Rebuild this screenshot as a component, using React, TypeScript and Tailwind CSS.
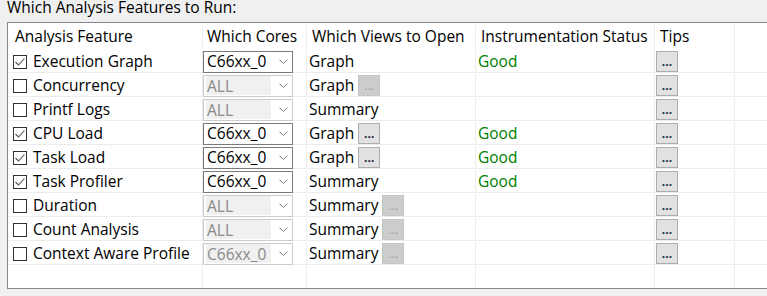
import { useState } from "react";

type Row = {
  name: string;
  checked: boolean;
  core: string;
  coreOn: boolean;
  view: string;
  viewBtn: "none" | "on" | "off";
  status?: string;
};

const rows: Row[] = [
  { name: "Execution Graph", checked: true, core: "C66xx_0", coreOn: true, view: "Graph", viewBtn: "none", status: "Good" },
  { name: "Concurrency", checked: false, core: "ALL", coreOn: false, view: "Graph", viewBtn: "off" },
  { name: "Printf Logs", checked: false, core: "ALL", coreOn: false, view: "Summary", viewBtn: "none" },
  { name: "CPU Load", checked: true, core: "C66xx_0", coreOn: true, view: "Graph", viewBtn: "on", status: "Good" },
  { name: "Task Load", checked: true, core: "C66xx_0", coreOn: true, view: "Graph", viewBtn: "on", status: "Good" },
  { name: "Task Profiler", checked: true, core: "C66xx_0", coreOn: true, view: "Summary", viewBtn: "none", status: "Good" },
  { name: "Duration", checked: false, core: "ALL", coreOn: false, view: "Summary", viewBtn: "off" },
  { name: "Count Analysis", checked: false, core: "ALL", coreOn: false, view: "Summary", viewBtn: "off" },
  { name: "Context Aware Profile", checked: false, core: "C66xx_0", coreOn: false, view: "Summary", viewBtn: "off" },
];

const cols = "grid grid-cols-[195px_104px_169px_179px_80px_1fr]";
const cell = "border-r border-[#ececec] flex items-center";

function Chevron() {
  return (
    <svg width="9" height="5" viewBox="0 0 9 5" className="shrink-0">
      <path d="M0.5 0.5 L4.5 4.5 L8.5 0.5" fill="none" stroke="#8a8a8a" strokeWidth="1" />
    </svg>
  );
}

function Check({ on }: { on: boolean }) {
  return (
    <span className="w-[14px] h-[14px] border border-[#333] bg-white flex items-center justify-center shrink-0">
      {on && (
        <svg width="12" height="12" viewBox="0 0 12 12">
          <path d="M1.5 6 L4.5 9 L10.5 2.5" fill="none" stroke="#555" strokeWidth="1.1" />
        </svg>
      )}
    </span>
  );
}

function Dots({ on }: { on: boolean }) {
  return (
    <span
      className={
        on
          ? "w-[22px] h-[21px] border border-[#adadad] bg-[#e1e1e1] flex items-end justify-center pb-[3px] text-[12px] leading-none font-bold text-[#1a2a40]"
          : "w-[22px] h-[21px] border border-[#c4c4c4] bg-[#cccccc] flex items-end justify-center pb-[3px] text-[12px] leading-none text-[#9a9a9a]"
      }
    >
      ...
    </span>
  );
}

export default function App() {
  const [data] = useState(rows);
  return (
    <div className="w-[767px] h-[296px] bg-[#f0f0f0] font-['Open_Sans','Noto_Sans',sans-serif] text-[15.5px] text-black overflow-hidden">
      <div className="pl-[7px] h-[22px] leading-[14px]">Which Analysis Features to Run:</div>
      <div className="ml-[7px] border-l border-t border-b border-[#828790] bg-white h-[267px]">
        <div className={`${cols} h-[26px] pt-[2px]`}>
          <div className={`${cell} pl-[7px]`}>Analysis Feature</div>
          <div className={`${cell} pl-[4px]`}>Which Cores</div>
          <div className={`${cell} pl-[5px]`}>Which Views to Open</div>
          <div className={`${cell} pl-[5px]`}>Instrumentation Status</div>
          <div className={`${cell} pl-[5px]`}>Tips</div>
          <div />
        </div>
        {data.map((r) => (
          <div key={r.name} className={`${cols} h-[24px] pt-[1px] border-b border-[#ececec]`}>
            <div className={`${cell} pl-[5px] gap-[6px]`}>
              <Check on={r.checked} />
              <span>{r.name}</span>
            </div>
            <div className={`${cell} pr-[13px]`}>
              <div
                className={
                  r.coreOn
                    ? "w-[90px] h-[22px] border border-[#7a7a7a] bg-white flex items-center pl-[2px] pr-[4px] justify-between"
                    : "w-[90px] h-[22px] border border-[#cccccc] bg-white flex items-center pl-[2px] pr-[4px] justify-between"
                }
              >
                <span className={r.coreOn ? "pl-[1px]" : "w-[65px] h-[19px] bg-[#f0f0f0] text-[#8a8a8a] pl-[1px] leading-[21px]"}>
                  {r.core}
                </span>
                <Chevron />
              </div>
            </div>
            <div className={`${cell} pl-[2px] gap-[4px]`}>
              <span>{r.view}</span>
              {r.viewBtn !== "none" && <Dots on={r.viewBtn === "on"} />}
            </div>
            <div className={`${cell} pl-[2px] text-[#008000]`}>{r.status ?? ""}</div>
            <div className={`${cell} pl-[1px]`}>
              <Dots on />
            </div>
            <div />
          </div>
        ))}
        <div className={`${cols} h-[23px]`}>
          <div className={cell} />
          <div className={cell} />
          <div className={cell} />
          <div className={cell} />
          <div className={cell} />
          <div />
        </div>
      </div>
    </div>
  );
}
